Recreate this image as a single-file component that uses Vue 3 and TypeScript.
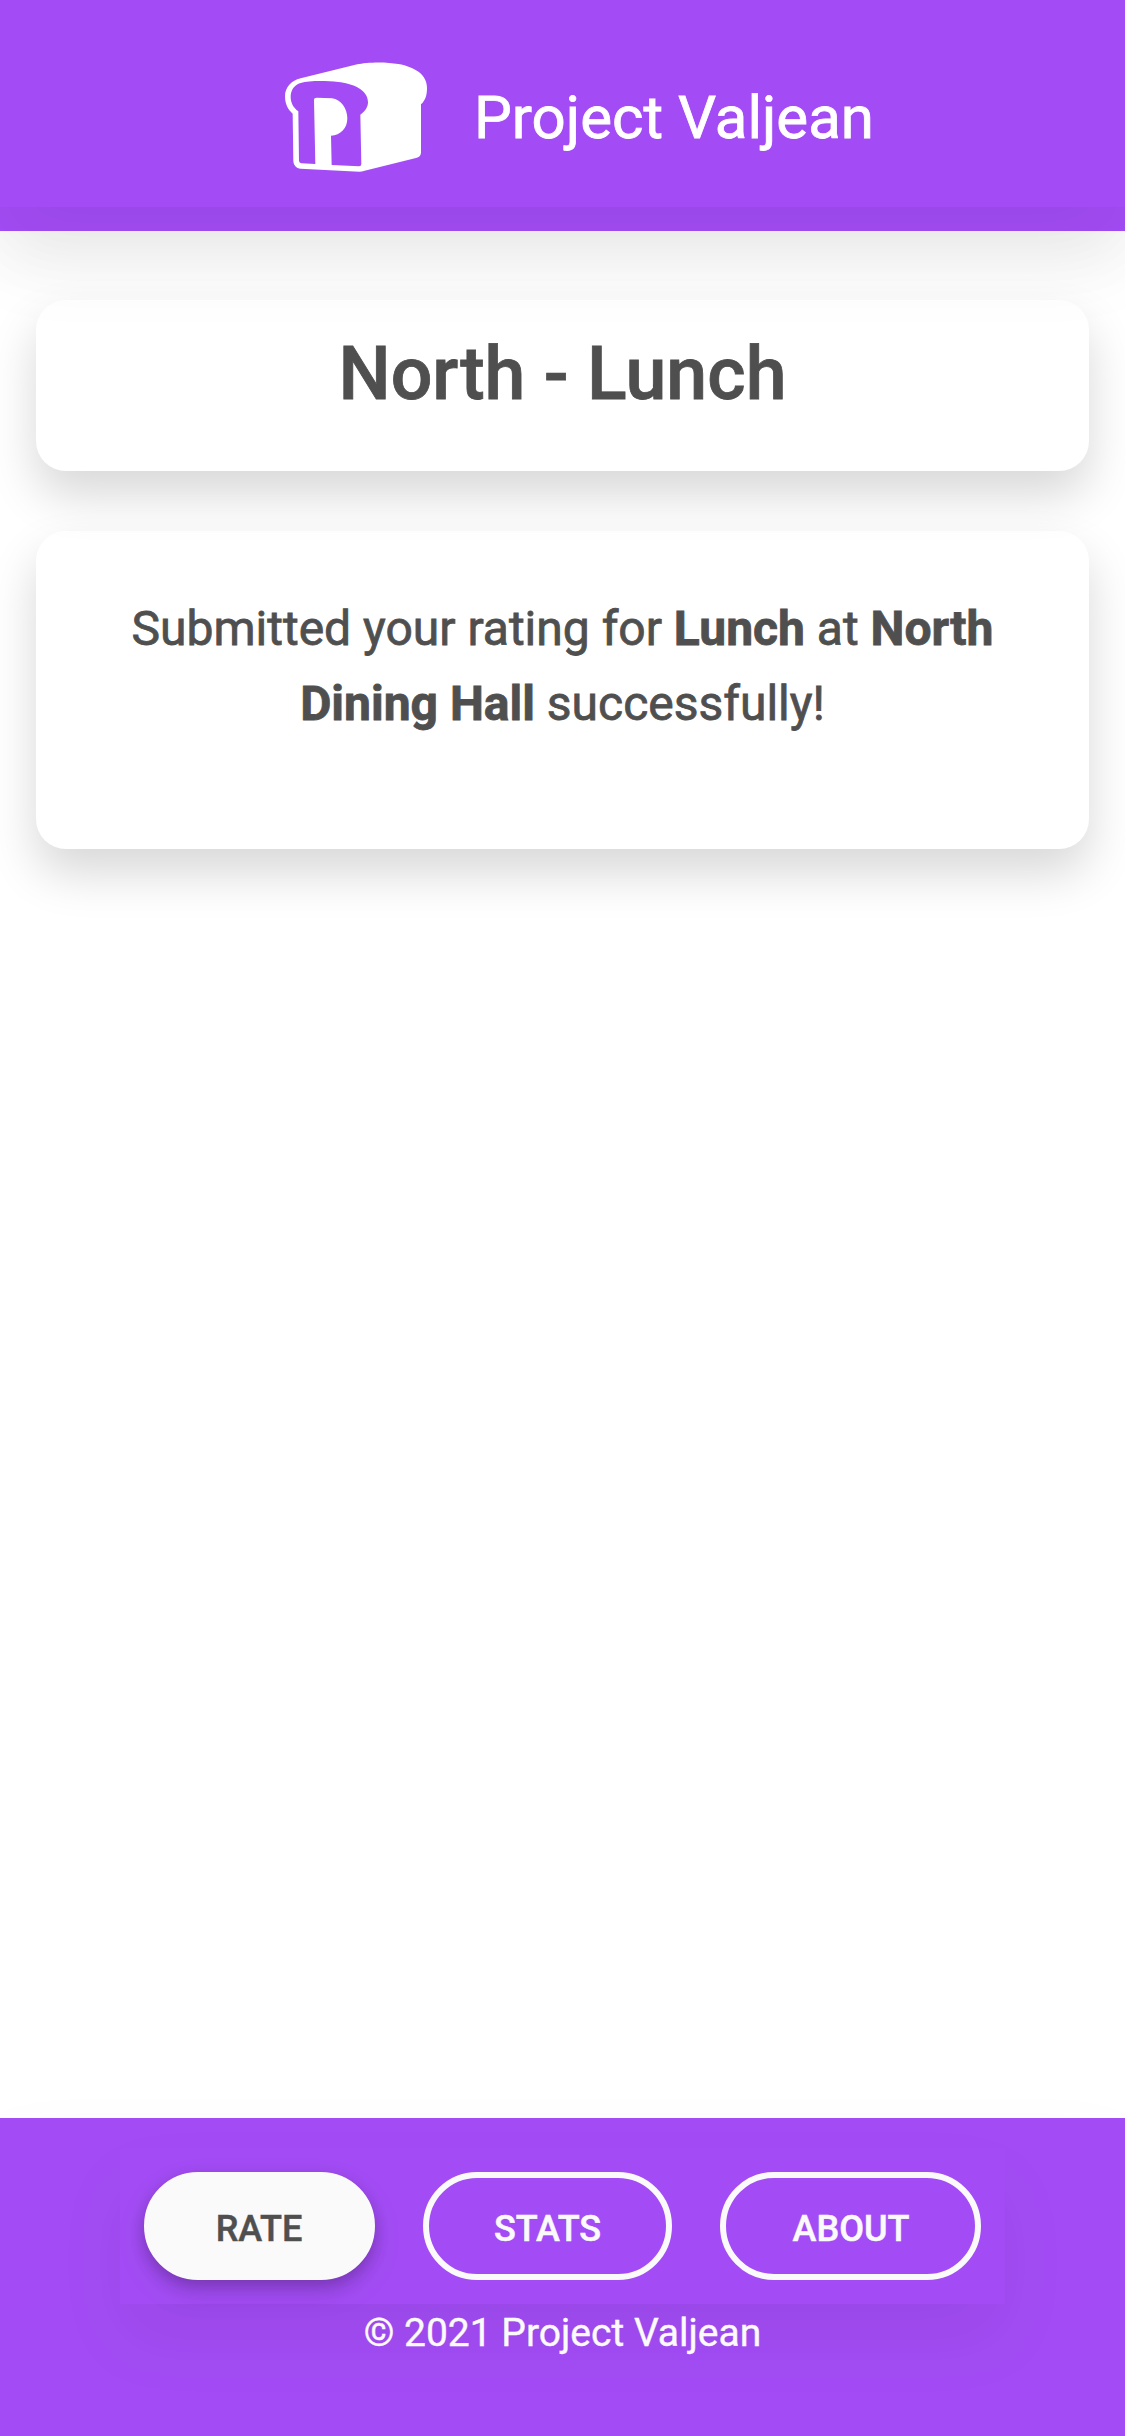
<script setup lang="ts">
interface Tab {
  label: string
  active: boolean
}

const appName: string = 'Project Valjean'
const hall: string = 'North'
const meal: string = 'Lunch'
const year: number = 2021

const tabs: Tab[] = [
  { label: 'Rate', active: true },
  { label: 'Stats', active: false },
  { label: 'About', active: false },
]
</script>

<template>
  <div class="page">
    <header class="top">
      <nav class="brand">
        <svg class="logo" viewBox="0 0 510 390" aria-hidden="true">
          <path
            fill="#fff"
            fill-rule="evenodd"
            d="M92 85 L262 43 C285 37 345 34 385 42 C435 51 471 74 471 113 C471 138 465 151 453 163 V308 C453 316 447 322 438 324 L284 362 Q276 365 268 365 L92 356 C79 355 70 345 70 332 L68 191 C52 178 45 159 45 139 C45 112 64 91 92 85 Z
               M92 99 C73 104 62 121 62 141 C62 158 70 173 85 184 L87 332 Q87 339 94 340 L136 342 L132 150 Q132 143 140 143 L186 145 C213 149 232 176 232 205 C232 235 212 256 183 257 L185 345 L267 349 Q274 349 274 342 L271 194 C287 183 294 170 294 156 C294 118 245 100 205 96 C165 92 117 92 92 99 Z"
          />
        </svg>
        <span class="name">{{ appName }}</span>
      </nav>
    </header>

    <main class="content">
      <section class="card heading">
        <h1>{{ hall }} - {{ meal }}</h1>
      </section>
      <section class="card message">
        <p>Submitted your rating for <b>{{ meal }}</b> at <b>{{ hall }} Dining Hall</b> successfully!</p>
      </section>
    </main>

    <footer class="bottom">
      <nav class="tabs">
        <a v-for="tab in tabs" :key="tab.label" class="tab" :class="{ active: tab.active }">{{ tab.label }}</a>
      </nav>
      <div class="copyright">© {{ year }} {{ appName }}</div>
    </footer>
  </div>
</template>

<style>
body {
  margin: 0;
  background: #fff;
}
</style>

<style scoped>
.page {
  display: flex;
  flex-direction: column;
  width: 1125px;
  height: 2436px;
  overflow: hidden;
  box-sizing: border-box;
  font-family: Roboto, 'Liberation Sans', sans-serif;
  color: #4f4f4f;
}

.top {
  height: 231px;
  flex: none;
  background: #a34cf5;
  box-shadow: 0 36px 72px rgba(0, 0, 0, 0.055);
}

.brand {
  display: flex;
  align-items: center;
  height: 207px;
  box-sizing: border-box;
  padding: 27px 0 0 270px;
  box-shadow: 0 36px 72px rgba(0, 0, 0, 0.055);
}

.logo {
  width: 170px;
  height: 130px;
  margin-bottom: 4px;
}

.name {
  margin: 1px 0 0 34px;
  font-size: 60px;
  line-height: 62px;
  color: #fff;
  white-space: nowrap;
  -webkit-text-stroke: 0.8px currentColor;
}

.content {
  flex: 1;
  display: flex;
  flex-direction: column;
  gap: 60px;
  padding: 69px 36px 0;
}

.card {
  box-sizing: border-box;
  border-radius: 30px;
  box-shadow: 0 24px 48px rgba(0, 0, 0, 0.157);
  text-align: center;
  -webkit-text-stroke: 0.8px currentColor;
}

.heading {
  height: 171px;
  padding-top: 29px;
}

.heading h1 {
  margin: 0;
  font-size: 73.5px;
  line-height: 90px;
  font-weight: 500;
}

.message {
  height: 318px;
  padding: 60px 72px 0;
}

.message p {
  margin: 0;
  font-size: 48px;
  line-height: 75px;
}

.message b {
  font-weight: 700;
}

.bottom {
  flex: none;
  display: flex;
  flex-direction: column;
  align-items: center;
  height: 318px;
  box-sizing: border-box;
  padding-top: 30px;
  background: #a34cf5;
  color: #fafafa;
  box-shadow: 0 36px 72px rgba(0, 0, 0, 0.055);
}

.tabs {
  display: flex;
  gap: 48px;
  padding: 24px;
  box-shadow: 0 36px 72px rgba(0, 0, 0, 0.055);
}

.tab {
  box-sizing: border-box;
  width: 249px;
  height: 108px;
  padding-top: 3px;
  border: 6px solid #fafafa;
  border-radius: 54px;
  font-size: 36px;
  line-height: 96px;
  font-weight: 500;
  text-align: center;
  text-transform: uppercase;
  -webkit-text-stroke: 0.5px currentColor;
}

.tab:first-child {
  width: 231px;
  padding-right: 1px;
}

.tab:last-child {
  width: 261px;
  padding-left: 1px;
}

.tab.active {
  background: #fafafa;
  color: #4f4f4f;
  box-shadow: 0 6px 15px rgba(0, 0, 0, 0.2), 0 12px 30px rgba(0, 0, 0, 0.1);
}

.copyright {
  margin-top: 1px;
  font-size: 39px;
  line-height: 57px;
  -webkit-text-stroke: 0.4px currentColor;
}
</style>
